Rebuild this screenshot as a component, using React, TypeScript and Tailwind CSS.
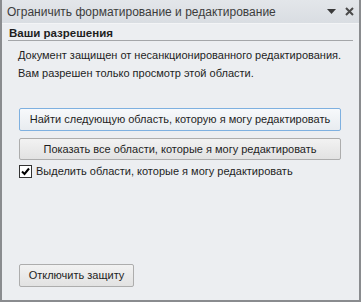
import React from 'react';

const font = { fontFamily: '"Liberation Sans", Arial, sans-serif' };

const TaskButton: React.FC<{ label: string; focused?: boolean; className?: string }> = ({ label, focused, className }) => (
  <button
    type="button"
    className={
      'flex items-center justify-center whitespace-nowrap rounded-[2px] border text-[11px] leading-[13px] text-[#1e1e1e] bg-gradient-to-b ' +
      (focused ? 'border-[#7eb0e0] from-[#f7f9fb] to-[#e8ecf0] ' : 'border-[#adadad] from-[#f2f2f2] to-[#e2e2e2] ') +
      (className ?? '')
    }
  >
    {label}
  </button>
);

export default function App() {
  return (
    <div className="w-[361px] h-[302px] bg-white" style={font}>
      <div className="w-full h-full flex flex-col bg-[#eceef1] border-x-2 border-b-2 border-[#8a8c8f]">
        {/* title bar */}
        <div className="h-[24px] flex items-center justify-between pl-[5px] pr-[5px] bg-gradient-to-b from-[#e3e6ea] to-[#d9dde2] border-b border-[#f3f4f6]">
          <span className="whitespace-nowrap text-[12px] leading-[14px] text-[#3c3c3c]">Ограничить форматирование и редактирование</span>
          <div className="flex items-center gap-[9px]">
            <svg width="9" height="5" viewBox="0 0 9 5">
              <path d="M0 0 H9 L4.5 5 Z" fill="#3a3a3a" />
            </svg>
            <svg width="9" height="9" viewBox="0 0 9 9">
              <path d="M1 1 L8 8 M8 1 L1 8" stroke="#4a4a4a" strokeWidth="2" />
            </svg>
          </div>
        </div>

        {/* section header */}
        <div className="mx-[6px] mt-[3px] pl-[1px] border-b border-[#a4a6a9] whitespace-nowrap text-[11.5px] leading-[13px] font-bold text-[#1e1e1e]">
          Ваши разрешения
        </div>

        <div className="pl-[16px] mt-[5px] whitespace-nowrap text-[11px] leading-[18px] text-[#1e1e1e]">
          <p>Документ защищен от несанкционированного редактирования.</p>
          <p>Вам разрешен только просмотр этой области.</p>
        </div>

        <div className="pl-[17px] mt-[26px] flex flex-col">
          <TaskButton focused label="Найти следующую область, которую я могу редактировать" className="w-[322px] h-[23px]" />
          <TaskButton label="Показать все области, которые я могу редактировать" className="w-[322px] h-[22px] mt-[7px]" />
          <label className="flex items-center h-[13px] mt-[5px] whitespace-nowrap text-[11px] leading-[13px] text-[#1e1e1e]">
            <span className="w-[13px] h-[13px] bg-white border border-[#333] flex items-center justify-center">
              <svg width="9" height="9" viewBox="0 0 9 9">
                <path d="M1 4.5 L3.5 7 L8 1.5" stroke="#000" strokeWidth="2" fill="none" />
              </svg>
            </span>
            <span className="ml-[4px]">Выделить области, которые я могу редактировать</span>
          </label>
        </div>

        <div className="pl-[17px] mt-auto mb-[13px]">
          <TaskButton label="Отключить защиту" className="w-[115px] h-[23px]" />
        </div>
      </div>
    </div>
  );
}
